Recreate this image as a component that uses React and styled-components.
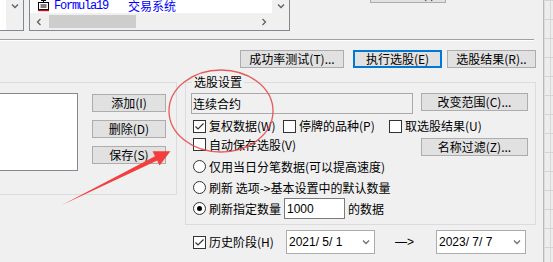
import React from "react";
import styled, { createGlobalStyle, css } from "styled-components";

const Global = createGlobalStyle`
  html, body { margin: 0; padding: 0; background: #f0f0f0; }
  body { font-family: "Noto Sans CJK SC", "Liberation Sans", sans-serif; }
`;

const Root = styled.div`
  position: relative;
  width: 553px;
  height: 262px;
  overflow: hidden;
  display: flex;
  background: #f0f0f0;
  color: #000;
  font-size: 12px;
  line-height: 14px;
  font-family: "Noto Sans CJK SC", "Liberation Sans", sans-serif;
`;

const Dialog = styled.div`
  width: 543px;
  flex: none;
  display: flex;
  flex-direction: column;
  border-right: 1px solid #b9b9b9;
`;

const Backdrop = styled.div`
  flex: 1;
  border-left: 1px solid #dcdcdc;
  background-color: #ededed;
  background-image: linear-gradient(to bottom, #d4d4d4 1px, transparent 1px),
    linear-gradient(to right, transparent 5px, #d8d8d8 5px, #d8d8d8 6px, transparent 6px);
  background-size: 100% 19px, 100% 100%;
`;

/* ---------- top strip ---------- */
const TopStrip = styled.div`
  display: flex;
  align-items: flex-start;
  height: 31px;
  flex: none;
`;

const MiniList = styled.div`
  width: 24px;
  height: 31px;
  box-sizing: border-box;
  display: flex;
  background: #fff;
  border-right: 1px solid #828790;
  border-bottom: 1px solid #828790;
`;

const MiniContent = styled.div`
  flex: 1;
  background: #fff;
`;

const ScrollCell = styled.div`
  width: 17px;
  flex: none;
  background: #f0f0f0;
  display: flex;
  justify-content: center;
  align-items: ${(p) => (p.$top ? "flex-start" : "center")};
  padding-top: ${(p) => (p.$top ? "2px" : "0")};
  box-sizing: border-box;
`;

const ListBox = styled.div`
  margin-left: 5px;
  width: 261px;
  height: 31px;
  box-sizing: border-box;
  border: 1px solid #828790;
  border-top: none;
  display: grid;
  grid-template-columns: 1fr 17px;
  grid-template-rows: 13px 17px;
  background: #f0f0f0;
`;

const ItemRow = styled.div`
  background: #fff;
  display: flex;
  align-items: flex-start;
  padding-left: 7px;
  overflow: hidden;
`;

const ItemIcon = styled.svg`
  flex: none;
  margin-right: 4px;
`;

const FormulaName = styled.span`
  font-family: "Liberation Mono", monospace;
  font-size: 12px;
  letter-spacing: -1.2px;
  line-height: 12px;
  color: #0000ff;
`;

const FormulaDesc = styled.span`
  margin-left: 20px;
  color: #0000ff;
  font-size: 12px;
  line-height: 12px;
`;

const HScroll = styled.div`
  display: flex;
  align-items: center;
  background: #f0f0f0;
`;

const Thumb = styled.div`
  margin-left: 2px;
  width: 87px;
  height: 13px;
  background: #cdcdcd;
`;

const Spacer = styled.div`
  flex: 1;
`;

const Corner = styled.div`
  background: #f0f0f0;
`;

const Btn = styled.button`
  box-sizing: border-box;
  flex: none;
  width: ${(p) => p.$w}px;
  height: ${(p) => p.$h || 18}px;
  margin: 0;
  margin-right: ${(p) => p.$mr || 0}px;
  padding: 0;
  background: #e1e1e1;
  border: 1px solid #adadad;
  font-family: inherit;
  font-size: 12px;
  line-height: 14px;
  color: #000;
  display: flex;
  align-items: center;
  justify-content: center;
  white-space: nowrap;
  ${(p) =>
    p.$focus &&
    css`
      border: 2px solid #0078d7;
    `}
`;

const TopButton = styled(Btn)`
  margin-left: 80px;
  margin-top: -15px;
`;

const Separator = styled.div`
  margin-top: 8px;
  width: 534px;
  border-top: 1px solid #a0a0a0;
  border-bottom: 1px solid #ffffff;
`;

const ButtonRow = styled.div`
  display: flex;
  justify-content: flex-end;
  margin-top: 9px;
  padding-right: 7px;
`;

/* ---------- groups ---------- */
const Main = styled.div`
  display: flex;
  align-items: flex-start;
  gap: 8px;
  margin-top: 14px;
  margin-left: -10px;
`;

const Group = styled.div`
  position: relative;
  box-sizing: border-box;
  flex: none;
  width: ${(p) => p.$w}px;
  height: ${(p) => p.$h}px;
  border: 1px solid #dcdcdc;
`;

const GroupTitle = styled.span`
  position: absolute;
  top: -8px;
  left: 6px;
  padding: 0 2px;
  background: #f0f0f0;
  line-height: 14px;
  white-space: nowrap;
`;

const LeftBody = styled.div`
  display: flex;
  padding-top: 10px;
`;

const WhiteList = styled.div`
  box-sizing: border-box;
  width: 87px;
  height: 78px;
  border: 1px solid #828790;
  background: #fff;
`;

const SideButtons = styled.div`
  display: flex;
  flex-direction: column;
  gap: 8px;
  margin-left: 14px;
  padding-top: 1px;
`;

const RightBody = styled.div`
  display: flex;
  flex-direction: column;
  padding: 10px 0 0 5px;
`;

const Row = styled.div`
  display: flex;
  align-items: ${(p) => p.$align || "flex-start"};
  height: ${(p) => p.$h}px;
  margin-top: ${(p) => p.$mt || 0}px;
  padding-left: ${(p) => p.$pl || 0}px;
  gap: ${(p) => p.$gap || 0}px;
`;

const TextBox = styled.div`
  box-sizing: border-box;
  width: 222px;
  height: 21px;
  border: 1px solid #a9a9a9;
  background: #f0f0f0;
  padding-left: 1px;
  display: flex;
  align-items: center;
  margin-right: 8px;
`;

const CheckGrid = styled.div`
  display: grid;
  grid-template-columns: 90px 106px auto;
  align-items: center;
  height: 14px;
  margin-top: 5px;
  padding-left: 2px;
`;

const CheckItem = styled.div`
  display: flex;
  align-items: center;
  gap: 3px;
  flex: ${(p) => (p.$grow ? 1 : "none")};
  width: ${(p) => (p.$w ? `${p.$w}px` : "auto")};
  height: 13px;
`;

const Box = styled.span`
  box-sizing: border-box;
  width: 13px;
  height: 13px;
  flex: none;
  border: 1px solid #333;
  background: #fff;
  display: inline-flex;
  align-items: center;
  justify-content: center;
  ${(p) =>
    p.$round &&
    css`
      border-radius: 50%;
    `}
`;

const Dot = styled.span`
  width: 5px;
  height: 5px;
  border-radius: 50%;
  background: #000;
`;

const Label = styled.span`
  white-space: pre;
  line-height: 14px;
`;

const NumInput = styled.div`
  box-sizing: border-box;
  width: 61px;
  height: 21px;
  border: 1px solid #7a7a7a;
  background: #fff;
  padding-left: 2px;
  display: flex;
  align-items: center;
  font-family: "Liberation Sans", sans-serif;
  font-size: 12px;
`;

const HistoryRow = styled.div`
  display: flex;
  align-items: center;
  height: 24px;
  margin-top: 5px;
  padding-left: 193px;
`;

const DatePicker = styled.div`
  box-sizing: border-box;
  width: ${(p) => p.$w}px;
  height: 24px;
  border: 1px solid #acacac;
  background: #fff;
  padding: 0 4px 0 2px;
  display: flex;
  align-items: center;
  justify-content: space-between;
  font-family: "Liberation Sans", sans-serif;
  font-size: 12px;
  white-space: pre;
`;

const ArrowText = styled.span`
  width: 61px;
  padding-left: 20px;
  box-sizing: border-box;
  white-space: nowrap;
  font-family: "Liberation Sans", sans-serif;
`;

const Overlay = styled.svg`
  position: absolute;
  left: 0;
  top: 0;
  pointer-events: none;
`;

/* ---------- small drawings ---------- */
const Chevron = ({ dir = "down", color = "#606060" }) => {
  const rot = { down: 0, up: 180, left: 90, right: -90 }[dir];
  return (
    <svg width="8" height="8" viewBox="0 0 8 8" style={{ transform: `rotate(${rot}deg)` }}>
      <polyline points="1,2.5 4,5.5 7,2.5" fill="none" stroke={color} strokeWidth="1.3" />
    </svg>
  );
};

const Check = ({ checked }) => (
  <Box>
    {checked && (
      <svg width="11" height="11" viewBox="0 0 11 11">
        <polyline points="1.5,5.5 4,8 9.5,2.5" fill="none" stroke="#333" strokeWidth="1.2" />
      </svg>
    )}
  </Box>
);

const Radio = ({ selected }) => <Box $round>{selected && <Dot />}</Box>;

const CheckLabel = ({ checked, children, w, grow }) => (
  <CheckItem $w={w} $grow={grow}>
    <Check checked={checked} />
    <Label>{children}</Label>
  </CheckItem>
);

export default function App() {
  return (
    <Root>
      <Global />
      <Dialog>
        <TopStrip>
          <MiniList>
            <MiniContent />
            <ScrollCell $top>
              <Chevron dir="down" />
            </ScrollCell>
          </MiniList>
          <ListBox>
            <ItemRow>
              <ItemIcon width="13" height="12" viewBox="0 0 13 12">
                <rect x="1.5" y="2.5" width="10" height="7" fill="#fff" stroke="#000" />
                <path d="M4 0.5h5M6.5 0.5v2" stroke="#000" />
                <path d="M3.5 5h6M3.5 7h6" stroke="#000" />
                <path d="M1 10.5h11" stroke="#d01010" strokeWidth="1.4" />
              </ItemIcon>
              <FormulaName>Formula19</FormulaName>
              <FormulaDesc>交易系统</FormulaDesc>
            </ItemRow>
            <ScrollCell $top>
              <Chevron dir="down" />
            </ScrollCell>
            <HScroll>
              <ScrollCell>
                <Chevron dir="left" />
              </ScrollCell>
              <Thumb />
              <Spacer />
              <ScrollCell>
                <Chevron dir="right" />
              </ScrollCell>
            </HScroll>
            <Corner />
          </ListBox>
          <TopButton $w={76}>导入方案(I)..</TopButton>
        </TopStrip>

        <Separator />

        <ButtonRow>
          <Btn $w={104} $mr={9}>成功率测试(T)...</Btn>
          <Btn $w={89} $mr={5} $focus>执行选股(E)</Btn>
          <Btn $w={89}>选股结果(R)..</Btn>
        </ButtonRow>

        <Main>
          <Group $w={187} $h={113}>
            <LeftBody>
              <WhiteList />
              <SideButtons>
                <Btn $w={74}>添加(I)</Btn>
                <Btn $w={74}>删除(D)</Btn>
                <Btn $w={74}>保存(S)</Btn>
              </SideButtons>
            </LeftBody>
          </Group>

          <Group $w={351} $h={143}>
            <GroupTitle>选股设置</GroupTitle>
            <RightBody>
              <Row $h={21}>
                <TextBox>连续合约</TextBox>
                <Btn $w={107}>改变范围(C)...</Btn>
              </Row>
              <CheckGrid>
                <CheckLabel checked>复权数据(W)</CheckLabel>
                <CheckLabel>停牌的品种(P)</CheckLabel>
                <CheckLabel>取选股结果(U)</CheckLabel>
              </CheckGrid>
              <Row $h={18} $mt={5} $pl={2}>
                <CheckLabel grow>自动保存选股(V)</CheckLabel>
                <Btn $w={107} $mr={7}>名称过滤(Z)...</Btn>
              </Row>
              <Row $h={21} $pl={2} $gap={3} $align="center">
                <Radio />
                <Label>仅用当日分笔数据(可以提高速度)</Label>
              </Row>
              <Row $h={21} $pl={2} $gap={3} $align="center">
                <Radio />
                <Label>刷新 选项-&gt;基本设置中的默认数量</Label>
              </Row>
              <Row $h={21} $pl={2} $gap={3} $align="center">
                <Radio selected />
                <Label>刷新指定数量</Label>
                <NumInput>1000</NumInput>
                <Label>的数据</Label>
              </Row>
            </RightBody>
          </Group>
        </Main>

        <HistoryRow>
          <CheckLabel checked w={93}>历史阶段(H)</CheckLabel>
          <DatePicker $w={89}>
            <span>2021/ 5/ 1</span>
            <Chevron dir="down" color="#707070" />
          </DatePicker>
          <ArrowText>—&gt;</ArrowText>
          <DatePicker $w={90}>
            <span>2023/ 7/ 7</span>
            <Chevron dir="down" color="#707070" />
          </DatePicker>
        </HistoryRow>
      </Dialog>
      <Backdrop />

      <Overlay width="553" height="262" viewBox="0 0 553 262">
        <ellipse cx="221" cy="111" rx="52" ry="41" fill="none" stroke="#e64a4a" strokeWidth="1.3" opacity="0.9" />
        <polygon
          points="62,205 155,156.2 152.6,151.2 170.4,151.3 159.6,165.6 157.2,160.6"
          fill="#f43e3e"
        />
      </Overlay>
    </Root>
  );
}
